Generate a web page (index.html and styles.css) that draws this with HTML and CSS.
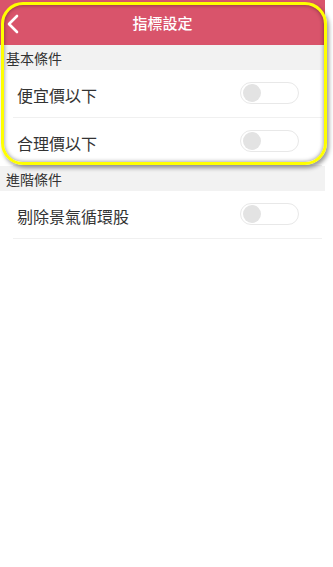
FILE: index.html
```html
<!DOCTYPE html>
<html lang="zh-Hant">
<head>
<meta charset="utf-8">
<link rel="stylesheet" href="styles.css">
</head>
<body>
<div class="page">
  <header class="topbar">
    <svg class="back" width="14" height="20" viewBox="0 0 14 20"><path d="M11 2 L3 10 L11 18" fill="none" stroke="#fff" stroke-width="2.6" stroke-linecap="round" stroke-linejoin="round"/></svg>
    <div class="title">指標設定</div>
  </header>
  <div class="section">基本條件</div>
  <div class="row"><span class="label">便宜價以下</span><span class="toggle"><span class="knob"></span></span></div>
  <div class="row"><span class="label">合理價以下</span><span class="toggle"><span class="knob"></span></span></div>
  <div class="section">進階條件</div>
  <div class="row"><span class="label">剔除景氣循環股</span><span class="toggle"><span class="knob"></span></span></div>
  <div class="highlight"></div>
</div>
</body>
</html>
```
FILE: styles.css
```css
html, body { margin: 0; padding: 0; background: #fff; }
body { font-family: "Noto Sans CJK TC", "Noto Sans", sans-serif; color: #333; }
.page { position: relative; width: 325px; height: 567px; background: #fff; }
.topbar { position: relative; height: 45px; background: #d9546b; display: flex; align-items: center; justify-content: center; }
.back { position: absolute; left: 6px; top: 14px; }
.title { color: #fff; font-size: 15px; font-weight: 500; }
.section { height: 25px; background: #f2f2f2; display: flex; align-items: center; padding-left: 6px; font-size: 14px; color: #333; }
.row { height: 47px; margin-left: 13px; margin-right: 3px; border-bottom: 1px solid #f0f0f0; display: flex; align-items: center; justify-content: space-between; padding-left: 4px; padding-right: 23px; }
.label { font-size: 16px; color: #333; padding-top: 2px; }
.toggle { width: 55px; height: 20px; border: 1px solid #e8e8e8; border-radius: 12px; display: flex; align-items: center; padding-left: 2px; box-sizing: content-box; margin-top: -2px; }
.knob { width: 18px; height: 18px; border-radius: 50%; background: #e3e3e3; }
.highlight { position: absolute; left: 1px; top: 2px; width: 320px; height: 157px; border: 3px solid #ffff00; border-radius: 22px; box-shadow: inset 0 0 4px rgba(0,0,0,0.45), 2px 3px 4px rgba(0,0,0,0.4); pointer-events: none; }
```
